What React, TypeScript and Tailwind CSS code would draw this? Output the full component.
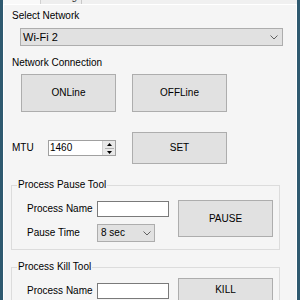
import React from "react";

const Chevron = () => (
  <svg width="8" height="5" viewBox="0 0 8 5" className="shrink-0">
    <polyline points="0.5,0.5 4,4 7.5,0.5" fill="none" stroke="#606060" strokeWidth="1" />
  </svg>
);

const Btn = ({ label, h }: { label: string; h: string }) => (
  <div className={`w-[95px] ${h} bg-[#e1e1e1] border border-[#adadad] flex items-center justify-center shrink-0`}>
    {label}
  </div>
);

const TextBox = () => <div className="w-[72px] h-[16px] bg-white border border-[#7a7a7a] shrink-0" />;

export default function App() {
  return (
    <div className="w-[300px] h-[300px] overflow-hidden flex bg-[#f0f0f0] font-['Liberation_Sans',Arial,sans-serif] text-[10px] leading-[12px] text-black">
      <div className="w-[3px] shrink-0 bg-[#2f5a70]" />
      <div className="flex-1 min-w-0 flex flex-col">
        {/* tab strip, scrolled mostly out of view */}
        <div className="h-[4px] flex overflow-hidden shrink-0">
          <div className="w-[38px] bg-[#f9f9f9] border-r border-[#d0d0d0]" />
          <div className="w-[41px] bg-[#eeeeee] border-r border-[#c8c8c8] pl-[5px] text-[#333]">
            <div className="mt-[-9px]">Setting</div>
          </div>
        </div>

        <div className="flex-1 bg-[#f5f5f5] border-t border-l border-r border-white pl-[8px]">
          <div className="mt-[5px] h-[12px]">Select Network</div>

          <div className="mt-[6px] ml-[8px] w-[263px] h-[18px] bg-[#e1e1e1] border border-[#adadad] flex items-center justify-between pl-[2px] pr-[4px]">
            <span className="text-[11px]">Wi-Fi 2</span>
            <Chevron />
          </div>

          <div className="mt-[11px] h-[12px]">Network Connection</div>

          <div className="mt-[5px] ml-[9px] flex gap-[16px]">
            <Btn label="ONLine" h="h-[38px]" />
            <Btn label="OFFLine" h="h-[38px]" />
          </div>

          <div className="mt-[20px] h-[32px] flex items-center">
            <div className="w-[36px]">MTU</div>
            <div className="w-[68px] h-[16px] bg-white border border-[#a0a0a0] flex items-center justify-between pl-[1px]">
              <span>1460</span>
              <div className="w-[13px] h-full bg-[#e8e8e8] border-l border-[#d0d0d0] flex flex-col items-center justify-center gap-[2px]">
                <svg width="5" height="3" viewBox="0 0 5 3">
                  <polygon points="0,3 2.5,0 5,3" fill="#000" />
                </svg>
                <div className="w-[9px] h-px bg-[#b0b0b0]" />
                <svg width="5" height="3" viewBox="0 0 5 3">
                  <polygon points="0,0 2.5,3 5,0" fill="#000" />
                </svg>
              </div>
            </div>
            <div className="ml-[16px]">
              <Btn label="SET" h="h-[32px]" />
            </div>
          </div>

          <fieldset className="mt-[15px] ml-[-1px] w-[269px] border border-[#dcdcdc]">
            <legend className="ml-[5px] px-[1px] leading-[12px]">Process Pause Tool</legend>
            <div className="flex pl-[15px] pb-[7px]">
              <div className="mt-[10px] flex flex-col">
                <div className="h-[16px] flex items-center">
                  <div className="w-[70px]">Process Name</div>
                  <TextBox />
                </div>
                <div className="mt-[7px] h-[18px] flex items-center">
                  <div className="w-[70px]">Pause Time</div>
                  <div className="w-[58px] h-[18px] bg-[#e1e1e1] border border-[#adadad] flex items-center justify-between pl-[3px] pr-[3px]">
                    <span>8 sec</span>
                    <Chevron />
                  </div>
                </div>
              </div>
              <div className="mt-[9px] ml-[9px]">
                <Btn label="PAUSE" h="h-[37px]" />
              </div>
            </div>
          </fieldset>

          <fieldset className="mt-[11px] ml-[-1px] w-[269px] border border-[#dcdcdc]">
            <legend className="ml-[5px] px-[1px] leading-[12px]">Process Kill Tool</legend>
            <div className="flex pl-[15px] pb-[7px]">
              <div className="mt-[10px] h-[16px] flex items-center">
                <div className="w-[70px]">Process Name</div>
                <TextBox />
              </div>
              <div className="mt-[5px] ml-[9px]">
                <Btn label="KILL" h="h-[23px]" />
              </div>
            </div>
          </fieldset>
        </div>
      </div>
      <div className="w-[3px] shrink-0 bg-[#2f5a70]" />
    </div>
  );
}
